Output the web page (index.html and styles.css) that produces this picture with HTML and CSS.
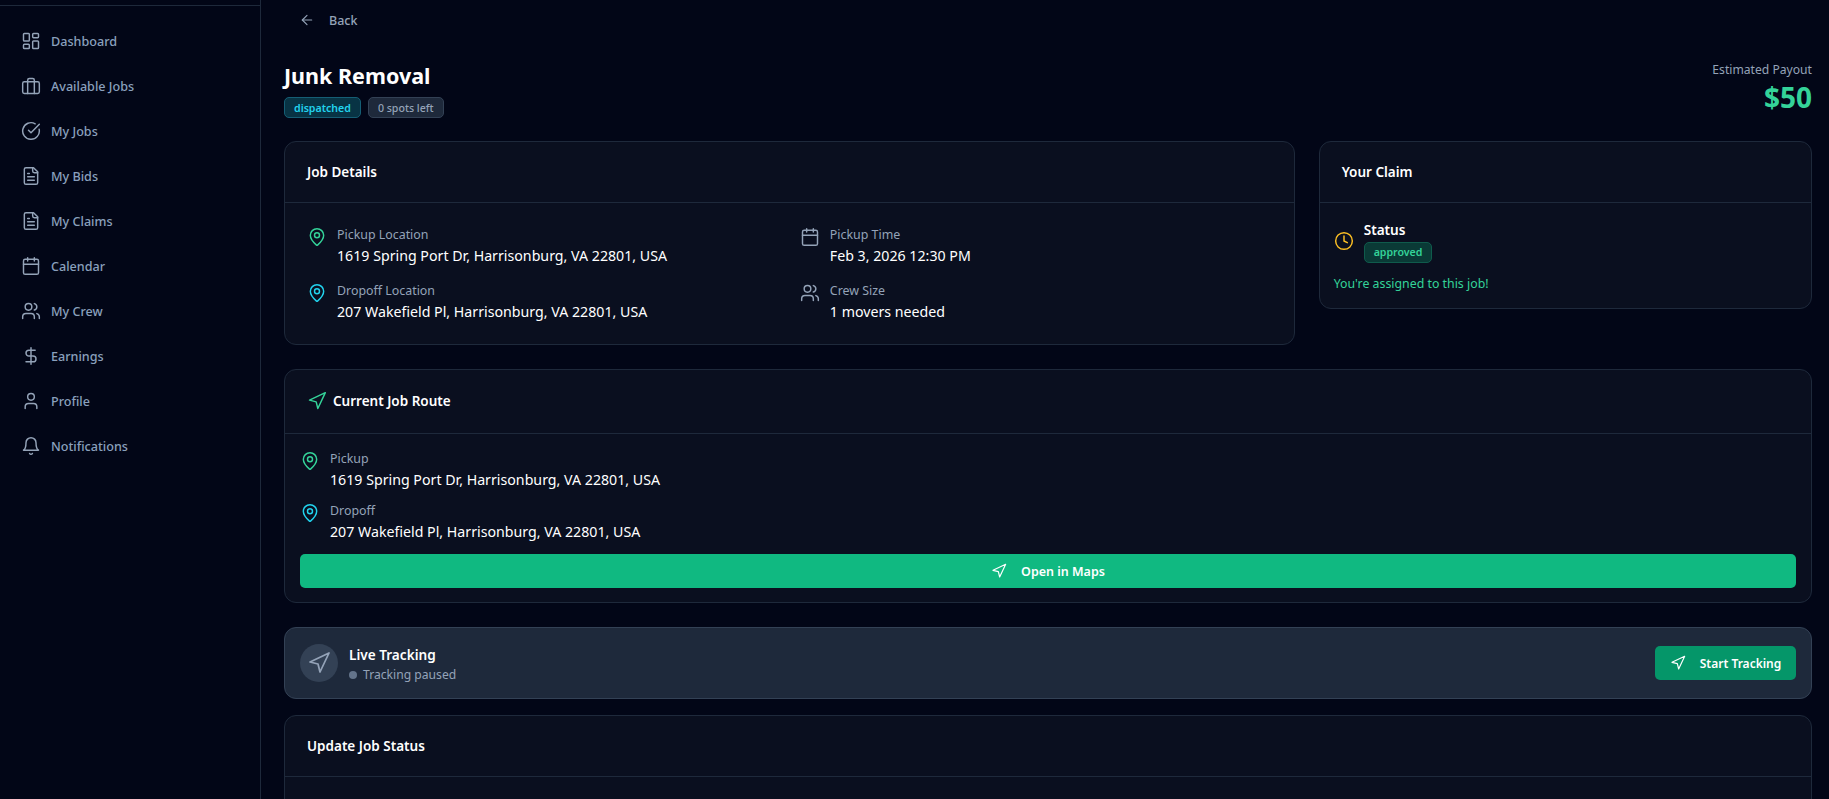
FILE: index.html
```html
<!DOCTYPE html>
<html lang="en">
<head>
  <meta charset="UTF-8">
  <title>Junk Removal</title>
  <link rel="stylesheet" href="styles.css">
</head>
<body>
  <svg class="icon-defs" width="0" height="0">
    <symbol id="i-dashboard" viewBox="0 0 24 24"><rect x="3" y="3" width="7" height="9" rx="1"/><rect x="14" y="3" width="7" height="5" rx="1"/><rect x="14" y="12" width="7" height="9" rx="1"/><rect x="3" y="16" width="7" height="5" rx="1"/></symbol>
    <symbol id="i-briefcase" viewBox="0 0 24 24"><path d="M16 21V5a2 2 0 0 0-2-2h-4a2 2 0 0 0-2 2v16"/><rect x="2" y="7" width="20" height="14" rx="2"/></symbol>
    <symbol id="i-check" viewBox="0 0 24 24"><path d="M21.801 10A10 10 0 1 1 17 3.335"/><path d="m9 11 3 3L22 4"/></symbol>
    <symbol id="i-file" viewBox="0 0 24 24"><path d="M15 2H6a2 2 0 0 0-2 2v16a2 2 0 0 0 2 2h12a2 2 0 0 0 2-2V7Z"/><path d="M14 2v4a2 2 0 0 0 2 2h4"/><path d="M10 9H8"/><path d="M16 13H8"/><path d="M16 17H8"/></symbol>
    <symbol id="i-calendar" viewBox="0 0 24 24"><path d="M8 2v4"/><path d="M16 2v4"/><rect x="3" y="4" width="18" height="18" rx="2"/><path d="M3 10h18"/></symbol>
    <symbol id="i-users" viewBox="0 0 24 24"><path d="M16 21v-2a4 4 0 0 0-4-4H6a4 4 0 0 0-4 4v2"/><circle cx="9" cy="7" r="4"/><path d="M22 21v-2a4 4 0 0 0-3-3.87"/><path d="M16 3.13a4 4 0 0 1 0 7.75"/></symbol>
    <symbol id="i-dollar" viewBox="0 0 24 24"><path d="M12 2v20"/><path d="M17 5H9.5a3.5 3.5 0 0 0 0 7h5a3.5 3.5 0 0 1 0 7H6"/></symbol>
    <symbol id="i-user" viewBox="0 0 24 24"><path d="M19 21v-2a4 4 0 0 0-4-4H9a4 4 0 0 0-4 4v2"/><circle cx="12" cy="7" r="4"/></symbol>
    <symbol id="i-bell" viewBox="0 0 24 24"><path d="M6 8a6 6 0 0 1 12 0c0 7 3 9 3 9H3s3-2 3-9"/><path d="M10.3 21a1.94 1.94 0 0 0 3.4 0"/></symbol>
    <symbol id="i-pin" viewBox="0 0 24 24"><path d="M20 10c0 4.993-5.539 10.193-7.399 11.799a1 1 0 0 1-1.202 0C9.539 20.193 4 14.993 4 10a8 8 0 0 1 16 0"/><circle cx="12" cy="10" r="3"/></symbol>
    <symbol id="i-nav" viewBox="0 0 24 24"><polygon points="3 11 22 2 13 21 11 13 3 11"/></symbol>
    <symbol id="i-clock" viewBox="0 0 24 24"><circle cx="12" cy="12" r="10"/><polyline points="12 6 12 12 16 14"/></symbol>
    <symbol id="i-back" viewBox="0 0 24 24"><path d="m12 19-7-7 7-7"/><path d="M19 12H5"/></symbol>
  </svg>

  <div class="app">
    <aside class="sidebar">
      <div class="sidebar-top"></div>
      <nav class="nav">
        <a class="nav-item"><svg class="icon"><use href="#i-dashboard"/></svg>Dashboard</a>
        <a class="nav-item"><svg class="icon"><use href="#i-briefcase"/></svg>Available Jobs</a>
        <a class="nav-item"><svg class="icon"><use href="#i-check"/></svg>My Jobs</a>
        <a class="nav-item"><svg class="icon"><use href="#i-file"/></svg>My Bids</a>
        <a class="nav-item"><svg class="icon"><use href="#i-file"/></svg>My Claims</a>
        <a class="nav-item"><svg class="icon"><use href="#i-calendar"/></svg>Calendar</a>
        <a class="nav-item"><svg class="icon"><use href="#i-users"/></svg>My Crew</a>
        <a class="nav-item"><svg class="icon"><use href="#i-dollar"/></svg>Earnings</a>
        <a class="nav-item"><svg class="icon"><use href="#i-user"/></svg>Profile</a>
        <a class="nav-item"><svg class="icon"><use href="#i-bell"/></svg>Notifications</a>
      </nav>
    </aside>

    <main class="main">
      <a class="back"><svg class="icon icon-sm"><use href="#i-back"/></svg>Back</a>

      <header class="page-head">
        <div>
          <h1>Junk Removal</h1>
          <div class="badges">
            <span class="badge badge-cyan">dispatched</span>
            <span class="badge badge-gray">0 spots left</span>
          </div>
        </div>
        <div class="payout">
          <div class="payout-label">Estimated Payout</div>
          <div class="payout-value">$50</div>
        </div>
      </header>

      <div class="top-grid">
        <section class="card job-card">
          <h2 class="card-head">Job Details</h2>
          <div class="details">
            <div class="info"><svg class="icon green"><use href="#i-pin"/></svg><div><div class="info-label">Pickup Location</div><div class="info-value">1619 Spring Port Dr, Harrisonburg, VA 22801, USA</div></div></div>
            <div class="info"><svg class="icon muted"><use href="#i-calendar"/></svg><div><div class="info-label">Pickup Time</div><div class="info-value">Feb 3, 2026 12:30 PM</div></div></div>
            <div class="info"><svg class="icon cyan"><use href="#i-pin"/></svg><div><div class="info-label">Dropoff Location</div><div class="info-value">207 Wakefield Pl, Harrisonburg, VA 22801, USA</div></div></div>
            <div class="info"><svg class="icon muted"><use href="#i-users"/></svg><div><div class="info-label">Crew Size</div><div class="info-value">1 movers needed</div></div></div>
          </div>
        </section>

        <section class="card">
          <h2 class="card-head">Your Claim</h2>
          <div class="claim-body">
            <div class="claim-status">
              <svg class="icon amber"><use href="#i-clock"/></svg>
              <div>
                <div class="claim-title">Status</div>
                <span class="badge badge-green">approved</span>
              </div>
            </div>
            <p class="claim-note">You're assigned to this job!</p>
          </div>
        </section>
      </div>

      <section class="card">
        <h2 class="card-head route-head"><svg class="icon green"><use href="#i-nav"/></svg>Current Job Route</h2>
        <div class="route-body">
          <div class="info"><svg class="icon green"><use href="#i-pin"/></svg><div><div class="info-label">Pickup</div><div class="info-value">1619 Spring Port Dr, Harrisonburg, VA 22801, USA</div></div></div>
          <div class="info"><svg class="icon cyan"><use href="#i-pin"/></svg><div><div class="info-label">Dropoff</div><div class="info-value">207 Wakefield Pl, Harrisonburg, VA 22801, USA</div></div></div>
          <a class="btn btn-wide"><svg class="icon icon-sm"><use href="#i-nav"/></svg>Open in Maps</a>
        </div>
      </section>

      <section class="tracking">
        <div class="tracking-icon"><svg class="icon icon-lg"><use href="#i-nav"/></svg></div>
        <div class="tracking-text">
          <div class="tracking-title">Live Tracking</div>
          <div class="tracking-sub"><span class="dot"></span>Tracking paused</div>
        </div>
        <a class="btn btn-dark"><svg class="icon icon-sm"><use href="#i-nav"/></svg>Start Tracking</a>
      </section>

      <section class="card update-card">
        <h2 class="card-head">Update Job Status</h2>
      </section>
    </main>
  </div>
</body>
</html>
```

FILE: styles.css
```css
* {
  box-sizing: border-box;
}
html, body {
  height: 100%;
  margin: 0;
  overflow: hidden;
}
body {
  font-family: "Noto Sans", sans-serif;
  background-color: #020617;
  color: #fff;
  font-size: 14px;
}
.icon-defs {
  position: absolute;
}
.icon {
  width: 20px;
  height: 20px;
  flex: none;
  fill: none;
  stroke: currentColor;
  stroke-width: 1.75;
  stroke-linecap: round;
  stroke-linejoin: round;
}
.icon-sm {
  width: 16px;
  height: 16px;
}
.icon-lg {
  width: 24px;
  height: 24px;
}
.green { color: #34d399; }
.cyan { color: #22d3ee; }
.muted { color: #94a3b8; }
.amber { color: #fbbf24; }

.app {
  display: flex;
  height: 100%;
}

/* sidebar */
.sidebar {
  width: 261px;
  flex: none;
  border-right: 1px solid #1e293b;
}
.sidebar-top {
  height: 6px;
  border-bottom: 1px solid #1e293b;
}
.nav {
  display: flex;
  flex-direction: column;
  padding: 13px 0 0 21px;
}
.nav-item {
  display: flex;
  align-items: center;
  gap: 10px;
  height: 45px;
  color: #8aa0bd;
  font-size: 12.6px;
  font-weight: 500;
}
.nav-item .icon {
  margin-top: -2px;
  color: #94a3b8;
}

/* main column */
.main {
  flex: 1;
  min-width: 0;
  padding: 0 17px 0 23px;
}
.back {
  display: flex;
  align-items: center;
  gap: 14px;
  height: 40px;
  padding-left: 15px;
  color: #94a3b8;
  font-size: 12.5px;
  font-weight: 500;
}
.page-head {
  display: flex;
  justify-content: space-between;
  align-items: flex-start;
  padding-top: 20px;
  height: 101px;
}
h1 {
  margin: 0;
  font-size: 21.5px;
  line-height: 32px;
  font-weight: 700;
}
.badges {
  display: flex;
  gap: 7px;
  margin-top: 5px;
}
.badge {
  display: inline-flex;
  align-items: center;
  height: 21px;
  padding: 0 9px;
  border: 1px solid;
  border-radius: 5px;
  font-size: 10.6px;
  font-weight: 600;
}
.badge-cyan {
  background-color: #083344;
  border-color: #155e75;
  color: #22d3ee;
}
.badge-gray {
  background-color: #1e293b;
  border-color: #334155;
  color: #94a3b8;
  font-weight: 500;
}
.badge-green {
  background-color: #0a3a36;
  border-color: #0f5b4c;
  color: #34d399;
}
.payout {
  text-align: right;
}
.payout-label {
  color: #94a3b8;
  font-size: 12.15px;
  line-height: 20px;
}
.payout-value {
  margin-top: 1px;
  color: #34d399;
  font-size: 28px;
  line-height: 32px;
  font-weight: 700;
}

/* cards */
.top-grid {
  display: grid;
  grid-template-columns: repeat(3, 1fr);
  gap: 24px;
  align-items: start;
  margin-bottom: 24px;
}
.job-card {
  grid-column: span 2;
}
.card {
  background-color: #0a0f1f;
  border: 1px solid #1e293b;
  border-radius: 12px;
}
.card-head {
  display: flex;
  align-items: center;
  margin: 0;
  height: 61px;
  padding: 0 22px 1px;
  border-bottom: 1px solid #1e293b;
  font-size: 13.5px;
  font-weight: 600;
}
.details {
  display: grid;
  grid-template-columns: 1fr 1fr;
  gap: 15px 20px;
  padding: 22px 21px 22px 22px;
}
.info {
  display: flex;
  gap: 10px;
}
.info .icon {
  margin-top: 2px;
}
.info-label {
  color: #94a3b8;
  font-size: 12.4px;
  line-height: 20px;
}
.info-value {
  font-size: 14.2px;
  line-height: 20px;
  margin-top: 1px;
}
.claim-body {
  padding: 17px 15px 14px 14px;
}
.claim-status {
  display: flex;
  align-items: center;
  gap: 10px;
}
.claim-title {
  margin-bottom: 1px;
  font-size: 13.6px;
  font-weight: 600;
  line-height: 20px;
}
.claim-note {
  margin: 11px 0 0;
  color: #34d399;
  font-size: 12.35px;
  line-height: 20px;
}
.route-head {
  height: 64px;
  gap: 6px;
  padding-bottom: 2px;
}
.route-body {
  display: flex;
  flex-direction: column;
  gap: 11px;
  padding: 15px 15px 14px;
}
.btn {
  display: flex;
  align-items: center;
  justify-content: center;
  gap: 14px;
  height: 34px;
  border-radius: 5px;
  background-color: #10b981;
  color: #fff;
  font-size: 12.5px;
  font-weight: 600;
}
.btn-wide {
  margin-top: 1px;
}
.btn-dark {
  width: 141px;
  background-color: #059669;
  font-size: 12px;
}
.tracking {
  display: flex;
  align-items: center;
  gap: 11px;
  height: 72px;
  margin: 24px 0 16px;
  padding: 0 15px;
  background-color: #1e293b;
  border: 1px solid #334155;
  border-radius: 12px;
}
.tracking-icon {
  display: flex;
  align-items: center;
  justify-content: center;
  width: 38px;
  height: 38px;
  border-radius: 50%;
  background-color: #334155;
  color: #94a3b8;
}
.tracking-text {
  flex: 1;
  padding-top: 2px;
}
.tracking-title {
  font-size: 13.6px;
  font-weight: 600;
  line-height: 20px;
}
.tracking-sub {
  display: flex;
  align-items: center;
  gap: 6px;
  margin-top: 1px;
  color: #94a3b8;
  font-size: 12.15px;
  line-height: 18px;
}
.dot {
  width: 8px;
  height: 8px;
  border-radius: 50%;
  background-color: #64748b;
}
.update-card {
  height: 300px;
}
```
